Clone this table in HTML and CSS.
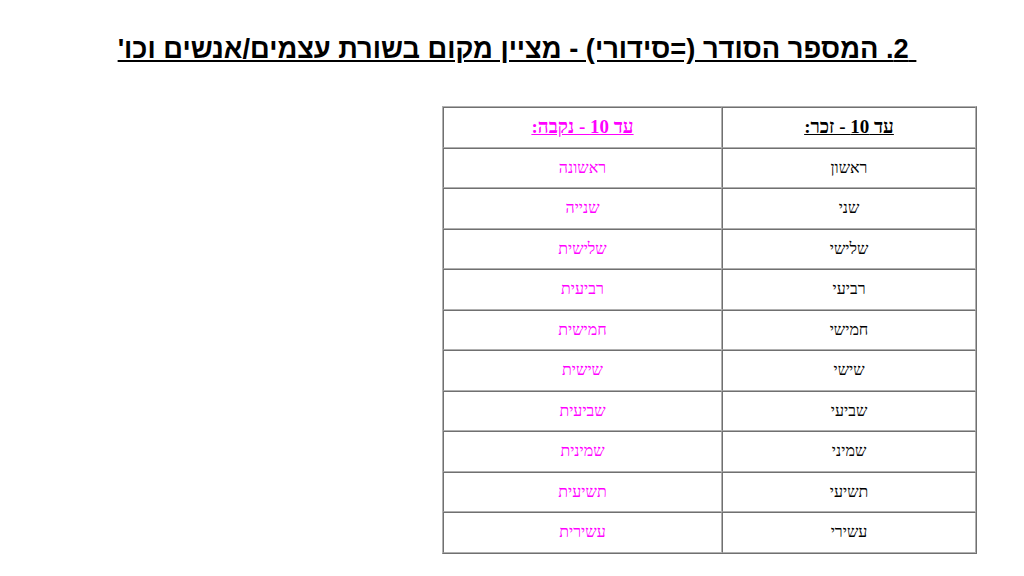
FILE: index.html
```html
<!DOCTYPE html>
<html lang="he" dir="rtl">
<head>
<meta charset="utf-8">
<title>המספר הסודר</title>
<link rel="stylesheet" href="styles.css">
</head>
<body>
<h2 class="title">&nbsp;2. המספר הסודר (=סידורי) - מציין מקום בשורת עצמים/אנשים וכו'</h2>
<table class="ordinals">
<tr class="head">
<td class="male"><u>עד 10 - זכר:</u></td>
<td class="female"><u>עד 10 - נקבה:</u></td>
</tr>
<tr><td class="male">ראשון</td><td class="female">ראשונה</td></tr>
<tr><td class="male">שני</td><td class="female">שנייה</td></tr>
<tr><td class="male">שלישי</td><td class="female">שלישית</td></tr>
<tr><td class="male">רביעי</td><td class="female">רביעית</td></tr>
<tr><td class="male">חמישי</td><td class="female">חמישית</td></tr>
<tr><td class="male">שישי</td><td class="female">שישית</td></tr>
<tr><td class="male">שביעי</td><td class="female">שביעית</td></tr>
<tr><td class="male">שמיני</td><td class="female">שמינית</td></tr>
<tr><td class="male">תשיעי</td><td class="female">תשיעית</td></tr>
<tr><td class="male">עשירי</td><td class="female">עשירית</td></tr>
</table>
</body>
</html>
```
FILE: styles.css
```css
html, body {
  background: #ffffff;
}
body {
  margin: 0;
  padding: 0;
  font-family: "Liberation Serif", "Times New Roman", serif;
  font-size: 16px;
  color: #000000;
}
.title {
  margin: 33px 0 0 0;
  padding: 0 0 0 10px;
  font-family: "Liberation Sans", Arial, sans-serif;
  font-weight: bold;
  font-size: 27.3px;
  text-align: center;
  text-decoration: underline;
  line-height: 31px;
}
.ordinals {
  margin: 42px 47px 0 0;
  border-collapse: separate;
  border-spacing: 0;
  border: 1px solid;
  border-color: #b0b0b0 #707070 #707070 #b0b0b0;
}
.ordinals td {
  height: 38.5px;
  padding: 0;
  text-align: center;
  vertical-align: middle;
  border: 1px solid;
  border-color: #707070 #b0b0b0 #b0b0b0 #707070;
}
.ordinals td.male {
  width: 252px;
  color: #000000;
}
.ordinals td.female {
  width: 277px;
  color: #ff00ff;
}
.head td {
  font-weight: bold;
  font-size: 19px;
}
```
